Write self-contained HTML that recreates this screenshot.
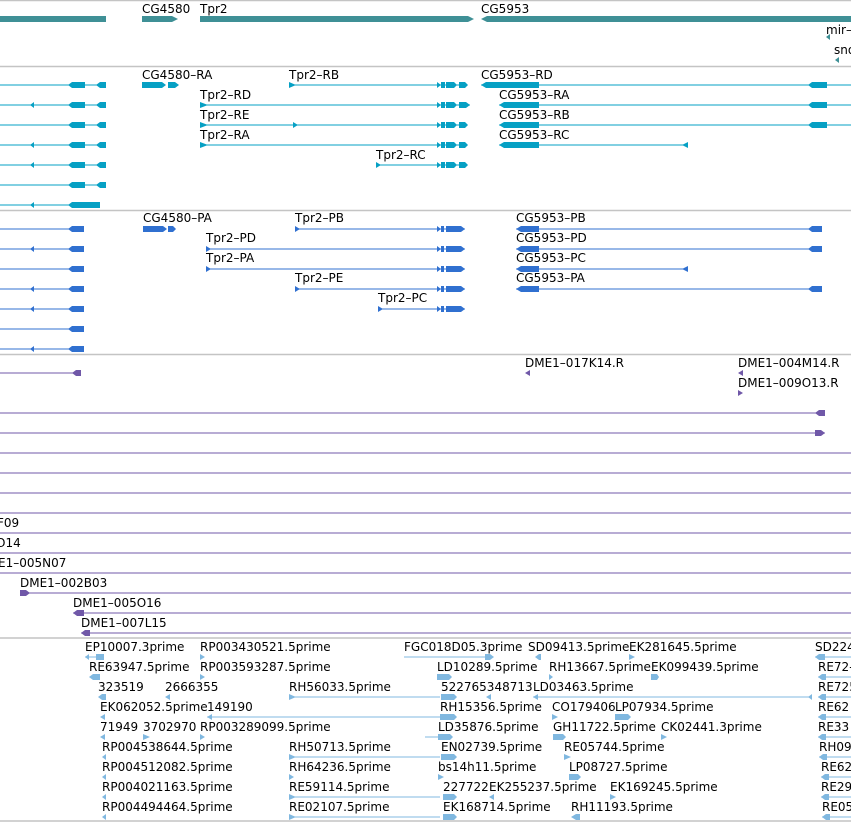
<!DOCTYPE html>
<html><head><meta charset="utf-8"><style>
html,body{margin:0;padding:0;background:#fff;}
svg{display:block;}
text{font-family:"DejaVu Sans","Liberation Sans",sans-serif;font-size:12px;fill:#000;}
</style></head><body>
<svg width="851" height="822" viewBox="0 0 851 822" xmlns="http://www.w3.org/2000/svg">
<g stroke="#c4c4c4" stroke-width="1.5">
<line x1="0" y1="0.5" x2="851" y2="0.5"/>
<line x1="0" y1="66.5" x2="851" y2="66.5"/>
<line x1="0" y1="210.5" x2="851" y2="210.5"/>
<line x1="0" y1="354.5" x2="851" y2="354.5"/>
<line x1="0" y1="638" x2="851" y2="638"/>
<line x1="0" y1="821" x2="851" y2="821"/>
</g>

<g fill="#3f9096">
<rect x="0" y="16" width="106" height="6"/>
<polygon points="142,16 172,16 178,19 172,22 142,22"/>
<polygon points="200,16 468,16 474,19 468,22 200,22"/>
<polygon points="487,16 851,16 851,22 487,22 481,19"/>
<polygon points="826,37 830,34 830,40"/>
<polygon points="835,60 839,57 839,63"/>
</g>
<text x="142" y="13">CG4580</text><text x="200" y="13">Tpr2</text><text x="481" y="13">CG5953</text>
<text x="826" y="34">mir–</text><text x="834" y="54">sno</text>

<g stroke="#06a0c4" stroke-width="1" shape-rendering="crispEdges">
<line x1="0" y1="85" x2="106" y2="85"/><line x1="0" y1="105" x2="106" y2="105"/><line x1="0" y1="125" x2="106" y2="125"/><line x1="0" y1="145" x2="106" y2="145"/><line x1="0" y1="165" x2="106" y2="165"/><line x1="0" y1="185" x2="106" y2="185"/><line x1="0" y1="205" x2="100" y2="205"/>
<line x1="289" y1="85" x2="466" y2="85"/><line x1="200" y1="105" x2="470" y2="105"/><line x1="200" y1="125" x2="466" y2="125"/><line x1="200" y1="145" x2="465" y2="145"/><line x1="376" y1="165" x2="466" y2="165"/>
<line x1="481" y1="85" x2="851" y2="85"/><line x1="499" y1="105" x2="851" y2="105"/><line x1="499" y1="125" x2="851" y2="125"/><line x1="499" y1="145" x2="688" y2="145"/>
</g>
<g fill="#06a0c4">
<g id="lx"><polygon points="68,85 72,82 85,82 85,88 72,88"/><polygon points="96,85 100,82 106,82 106,88 100,88"/></g>
<use href="#lx" y="20"/><use href="#lx" y="40"/><use href="#lx" y="60"/><use href="#lx" y="80"/><use href="#lx" y="100"/>
<polygon points="68,205 72,202 100,202 100,208 72,208"/>
<g id="sa"><polygon points="30,105 34,102 34,108"/></g>
<use href="#sa" y="40"/><use href="#sa" y="60"/><use href="#sa" y="100"/>
<polygon points="142,82 162,82 166,85 162,88 142,88"/><polygon points="168,82 175,82 179,85 175,88 168,88"/>
<g id="tx"><polygon points="437,82 441,85 437,88"/><rect x="441" y="82" width="4" height="6"/><polygon points="446,82 454,82 457,85 454,88 446,88"/><polygon points="459,82 465,82 468,85 465,88 459,88"/></g>
<use href="#tx" y="20"/><use href="#tx" y="40"/><use href="#tx" y="60"/><use href="#tx" y="80"/>
<polygon points="466,102 470,105 466,108 462,108 462,102"/>
<polygon points="289,82 296,85 289,88"/>
<polygon points="200,102 208,105 200,108"/><polygon points="200,122 208,125 200,128"/><polygon points="293,122 298,125 293,128"/><polygon points="200,142 208,145 200,148"/><polygon points="376,162 381,165 376,168"/>
<polygon points="481,85 486,82 539,82 539,88 486,88"/>
<polygon points="499,105 504,102 539,102 539,108 504,108"/><polygon points="499,125 504,122 539,122 539,128 504,128"/><polygon points="499,145 504,142 539,142 539,148 504,148"/>
<polygon points="808,85 812,82 827,82 827,88 812,88"/><polygon points="808,105 812,102 827,102 827,108 812,108"/><polygon points="808,125 812,122 827,122 827,128 812,128"/>
<polygon points="682,145 688,142 688,148"/>
</g>
<text x="142" y="79">CG4580–RA</text><text x="289" y="79">Tpr2–RB</text><text x="481" y="79">CG5953–RD</text>
<text x="200" y="99">Tpr2–RD</text><text x="499" y="99">CG5953–RA</text>
<text x="200" y="119">Tpr2–RE</text><text x="499" y="119">CG5953–RB</text>
<text x="200" y="139">Tpr2–RA</text><text x="499" y="139">CG5953–RC</text>
<text x="376" y="159">Tpr2–RC</text>

<g stroke="#3070d0" stroke-width="1" shape-rendering="crispEdges">
<line x1="0" y1="229" x2="84" y2="229"/><line x1="0" y1="249" x2="84" y2="249"/><line x1="0" y1="269" x2="84" y2="269"/><line x1="0" y1="289" x2="84" y2="289"/><line x1="0" y1="309" x2="84" y2="309"/><line x1="0" y1="329" x2="84" y2="329"/><line x1="0" y1="349" x2="84" y2="349"/>
<line x1="295" y1="229" x2="465" y2="229"/><line x1="206" y1="249" x2="465" y2="249"/><line x1="206" y1="269" x2="465" y2="269"/><line x1="295" y1="289" x2="465" y2="289"/><line x1="378" y1="309" x2="465" y2="309"/>
<line x1="516" y1="229" x2="822" y2="229"/><line x1="516" y1="249" x2="822" y2="249"/><line x1="516" y1="269" x2="688" y2="269"/><line x1="516" y1="289" x2="822" y2="289"/>
</g>
<g fill="#3070d0">
<g id="px"><polygon points="68,229 72,226 84,226 84,232 72,232"/></g>
<use href="#px" y="20"/><use href="#px" y="40"/><use href="#px" y="60"/><use href="#px" y="80"/><use href="#px" y="100"/><use href="#px" y="120"/>
<g id="pa"><polygon points="30,249 34,246 34,252"/></g><use href="#pa" y="40"/><use href="#pa" y="60"/><use href="#pa" y="100"/>
<polygon points="143,226 163,226 167,229 163,232 143,232"/><polygon points="168,226 173,226 176,229 173,232 168,232"/>
<g id="ptx"><polygon points="437,226 441,229 437,232"/><rect x="441" y="226" width="3" height="6"/><polygon points="446,226 461,226 465,229 461,232 446,232"/></g>
<use href="#ptx" y="20"/><use href="#ptx" y="40"/><use href="#ptx" y="60"/><use href="#ptx" y="80"/>
<polygon points="295,226 300,229 295,232"/><polygon points="206,246 211,249 206,252"/><polygon points="206,266 211,269 206,272"/><polygon points="295,286 300,289 295,292"/><polygon points="378,306 383,309 378,312"/>
<g id="cx"><polygon points="516,229 521,226 539,226 539,232 521,232"/></g><use href="#cx" y="20"/><use href="#cx" y="40"/><use href="#cx" y="60"/>
<g id="cr"><polygon points="808,229 812,226 822,226 822,232 812,232"/></g><use href="#cr" y="20"/><use href="#cr" y="60"/>
<polygon points="682,269 688,266 688,272"/>
</g>
<text x="143" y="222">CG4580–PA</text><text x="295" y="222">Tpr2–PB</text><text x="516" y="222">CG5953–PB</text>
<text x="206" y="242">Tpr2–PD</text><text x="516" y="242">CG5953–PD</text>
<text x="206" y="262">Tpr2–PA</text><text x="516" y="262">CG5953–PC</text>
<text x="295" y="282">Tpr2–PE</text><text x="516" y="282">CG5953–PA</text>
<text x="378" y="302">Tpr2–PC</text>

<g stroke="#7058a8" stroke-width="1" shape-rendering="crispEdges">
<line x1="0" y1="373" x2="80" y2="373"/>
<line x1="0" y1="413" x2="825" y2="413"/><line x1="0" y1="433" x2="825" y2="433"/>
<line x1="0" y1="453" x2="851" y2="453"/><line x1="0" y1="473" x2="851" y2="473"/><line x1="0" y1="493" x2="851" y2="493"/><line x1="0" y1="513" x2="851" y2="513"/><line x1="0" y1="533" x2="851" y2="533"/><line x1="0" y1="553" x2="851" y2="553"/><line x1="0" y1="573" x2="851" y2="573"/>
<line x1="20" y1="593" x2="851" y2="593"/><line x1="73" y1="613" x2="851" y2="613"/><line x1="81" y1="633" x2="851" y2="633"/>
</g>
<g fill="#7058a8">
<polygon points="72,373 76,370 81,370 81,376 76,376"/>
<polygon points="525,373 530,370 530,376"/><polygon points="738,373 743,370 743,376"/><polygon points="738,390 743,393 738,396"/>
<polygon points="815,413 819,410 825,410 825,416 819,416"/><polygon points="815,430 821,430 825,433 821,436 815,436"/>
<polygon points="20,590 26,590 30,593 26,596 20,596"/>
<polygon points="73,613 77,610 84,610 84,616 77,616"/><polygon points="81,633 85,630 90,630 90,636 85,636"/>
</g>
<text x="525" y="367">DME1–017K14.R</text><text x="738" y="367">DME1–004M14.R</text><text x="738" y="387">DME1–009O13.R</text>
<text x="-3" y="527">F09</text><text x="-4" y="547">O14</text><text x="-2" y="567">E1–005N07</text>
<text x="20" y="587">DME1–002B03</text><text x="73" y="607">DME1–005O16</text><text x="81" y="627">DME1–007L15</text>

<g stroke="#80b8e0" stroke-width="1" shape-rendering="crispEdges">
<line x1="85" y1="657" x2="103" y2="657"/><line x1="404" y1="657" x2="490" y2="657"/><line x1="815" y1="657" x2="851" y2="657"/>
<line x1="818" y1="677" x2="851" y2="677"/>
<line x1="289" y1="697" x2="440" y2="697"/><line x1="533" y1="697" x2="812" y2="697"/><line x1="818" y1="697" x2="851" y2="697"/>
<line x1="207" y1="717" x2="440" y2="717"/><line x1="818" y1="717" x2="851" y2="717"/>
<line x1="425" y1="737" x2="440" y2="737"/><line x1="818" y1="737" x2="851" y2="737"/>
<line x1="289" y1="757" x2="440" y2="757"/><line x1="819" y1="757" x2="851" y2="757"/>
<line x1="821" y1="777" x2="851" y2="777"/>
<line x1="289" y1="797" x2="440" y2="797"/><line x1="821" y1="797" x2="851" y2="797"/>
<line x1="289" y1="817" x2="440" y2="817"/><line x1="822" y1="817" x2="851" y2="817"/>
</g>
<g fill="#80b8e0">
<polygon points="85,657 89,654 89,660"/><rect x="96" y="654" width="8" height="6"/><polygon points="200,654 205,657 200,660"/><polygon points="485,654 490,654 494,657 490,660 485,660"/><polygon points="535,657 539,654 541,654 541,660 539,660"/><polygon points="629,654 635,657 629,660"/><polygon points="815,657 819,654 825,654 825,660 819,660"/>
<polygon points="89,677 93,674 100,674 100,680 93,680"/><polygon points="200,674 205,677 200,680"/><polygon points="437,674 449,674 452,677 449,680 437,680"/><polygon points="549,674 553,677 549,680"/><polygon points="651,674 657,674 659,677 657,680 651,680"/><polygon points="818,677 822,674 826,674 826,680 822,680"/>
<polygon points="98,697 102,694 106,694 106,700 102,700"/><polygon points="165,697 170,694 170,700"/><polygon points="289,694 296,697 289,700"/><polygon points="441,694 454,694 457,697 454,700 441,700"/><polygon points="486,697 491,694 491,700"/><polygon points="533,697 538,694 538,700"/><polygon points="808,697 812,694 812,700"/><polygon points="818,697 822,694 826,694 826,700 822,700"/>
<polygon points="100,717 105,714 105,720"/><polygon points="207,717 212,714 212,720"/><polygon points="440,714 454,714 457,717 454,720 440,720"/><polygon points="552,714 558,717 552,720"/><polygon points="615,714 628,714 631,717 628,720 615,720"/><polygon points="818,717 822,714 826,714 826,720 822,720"/>
<polygon points="100,737 105,734 105,740"/><polygon points="143,734 150,737 143,740"/><polygon points="200,734 205,737 200,740"/><polygon points="438,734 450,734 453,737 450,740 438,740"/><polygon points="553,734 563,734 566,737 563,740 553,740"/><polygon points="661,734 667,737 661,740"/><polygon points="818,737 822,734 826,734 826,740 822,740"/>
<polygon points="102,757 106,754 106,760"/><polygon points="289,754 296,757 289,760"/><polygon points="441,754 454,754 457,757 454,760 441,760"/><polygon points="564,754 571,757 564,760"/><polygon points="819,757 823,754 827,754 827,760 823,760"/>
<polygon points="102,777 106,774 106,780"/><polygon points="289,774 294,777 289,780"/><polygon points="438,774 444,777 438,780"/><polygon points="569,774 578,774 581,777 578,780 569,780"/><polygon points="821,777 825,774 829,774 829,780 825,780"/>
<polygon points="102,797 106,794 106,800"/><polygon points="289,794 296,797 289,800"/><polygon points="443,794 454,794 457,797 454,800 443,800"/><polygon points="489,797 494,794 494,800"/><polygon points="610,794 616,797 610,800"/><polygon points="821,797 825,794 829,794 829,800 825,800"/>
<polygon points="102,817 106,814 106,820"/><polygon points="289,814 296,817 289,820"/><polygon points="443,814 454,814 457,817 454,820 443,820"/><polygon points="571,817 576,814 580,814 580,820 576,820"/><polygon points="822,817 826,814 830,814 830,820 826,820"/>
</g>
<text x="85" y="651">EP10007.3prime</text><text x="200" y="651">RP003430521.5prime</text><text x="404" y="651">FGC018D05.3prime</text><text x="528" y="651">SD09413.5prime</text><text x="629" y="651">EK281645.5prime</text><text x="815" y="651">SD224</text>
<text x="89" y="671">RE63947.5prime</text><text x="200" y="671">RP003593287.5prime</text><text x="437" y="671">LD10289.5prime</text><text x="549" y="671">RH13667.5prime</text><text x="651" y="671">EK099439.5prime</text><text x="818" y="671">RE72-</text>
<text x="98" y="691">323519</text><text x="165" y="691">2666355</text><text x="289" y="691">RH56033.5prime</text><text x="441" y="691">522765348713</text><text x="533" y="691">LD03463.5prime</text><text x="818" y="691">RE725</text>
<text x="100" y="711">EK062052.5prime</text><text x="207" y="711">149190</text><text x="440" y="711">RH15356.5prime</text><text x="552" y="711">CO179406</text><text x="615" y="711">LP07934.5prime</text><text x="818" y="711">RE62</text>
<text x="100" y="731">71949</text><text x="143" y="731">3702970</text><text x="200" y="731">RP003289099.5prime</text><text x="438" y="731">LD35876.5prime</text><text x="553" y="731">GH11722.5prime</text><text x="661" y="731">CK02441.3prime</text><text x="818" y="731">RE33</text>
<text x="102" y="751">RP004538644.5prime</text><text x="289" y="751">RH50713.5prime</text><text x="441" y="751">EN02739.5prime</text><text x="564" y="751">RE05744.5prime</text><text x="819" y="751">RH09</text>
<text x="102" y="771">RP004512082.5prime</text><text x="289" y="771">RH64236.5prime</text><text x="438" y="771">bs14h11.5prime</text><text x="569" y="771">LP08727.5prime</text><text x="821" y="771">RE62</text>
<text x="102" y="791">RP004021163.5prime</text><text x="289" y="791">RE59114.5prime</text><text x="443" y="791">227722</text><text x="489" y="791">EK255237.5prime</text><text x="610" y="791">EK169245.5prime</text><text x="821" y="791">RE29</text>
<text x="102" y="811">RP004494464.5prime</text><text x="289" y="811">RE02107.5prime</text><text x="443" y="811">EK168714.5prime</text><text x="571" y="811">RH11193.5prime</text><text x="822" y="811">RE05</text>
</svg>
</body></html>
